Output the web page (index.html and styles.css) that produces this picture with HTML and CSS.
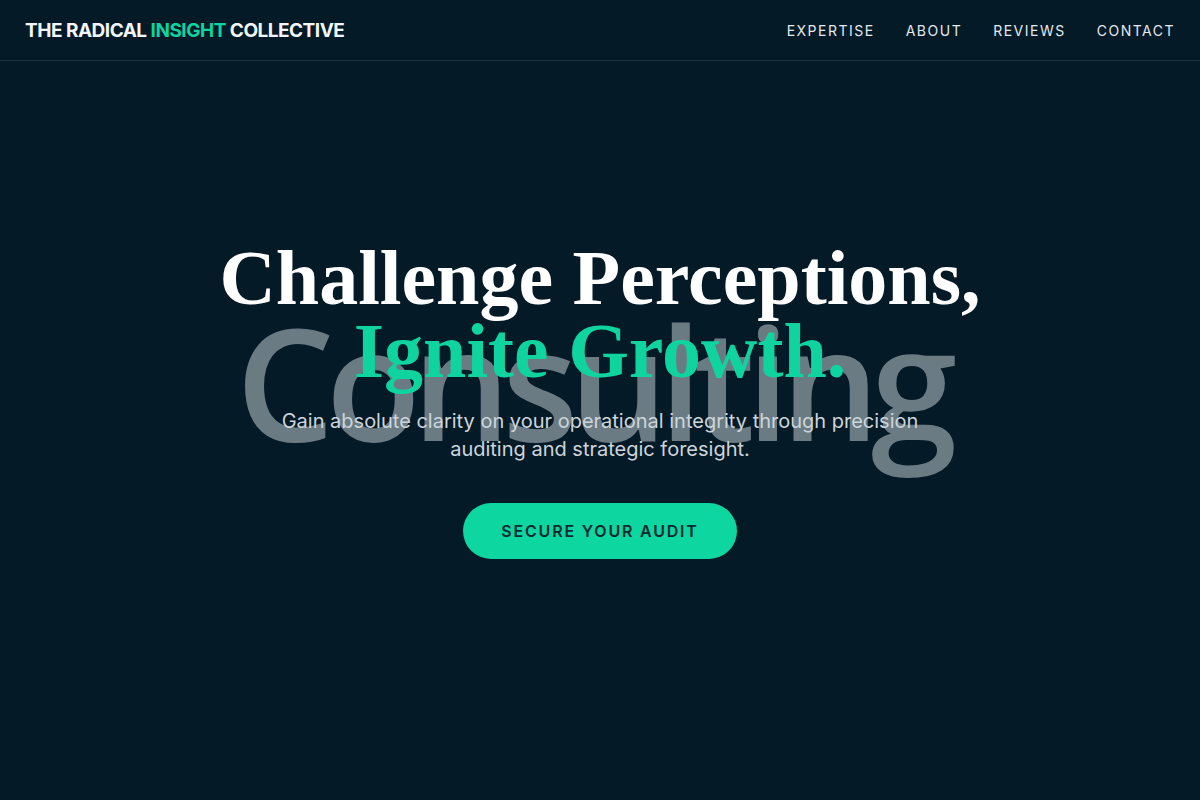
FILE: index.html
```html
<!DOCTYPE html>
<html lang="en">
<head>
<meta charset="utf-8">
<title>The Radical Insight Collective</title>
<link rel="stylesheet" href="styles.css">
</head>
<body>
<header class="nav">
  <div class="logo">THE RADICAL <span class="accent">INSIGHT</span> COLLECTIVE</div>
  <nav class="links">
    <a href="#">EXPERTISE</a>
    <a href="#">ABOUT</a>
    <a href="#">REVIEWS</a>
    <a href="#">CONTACT</a>
  </nav>
</header>
<main class="hero">
  <div class="bgword" aria-hidden="true">Consulting</div>
  <div class="content">
    <h1 class="title">Challenge Perceptions,<br><span class="accent">Ignite Growth.</span></h1>
    <p class="lead">Gain absolute clarity on your operational integrity through precision auditing and strategic foresight.</p>
    <a class="cta" href="#">SECURE YOUR AUDIT</a>
  </div>
</main>
</body>
</html>
```
FILE: styles.css
```css
* { box-sizing: border-box; }
html, body { margin: 0; padding: 0; }
body {
  background: #051a27;
  color: #ffffff;
  font-family: Inter, "Liberation Sans", sans-serif;
  overflow: hidden;
}
.nav {
  position: fixed;
  top: 0; left: 0; right: 0;
  height: 61px;
  display: flex;
  align-items: center;
  justify-content: space-between;
  padding: 0 25px;
  border-bottom: 1px solid #1c313d;
  background: #051a27;
  z-index: 10;
}
.logo {
  font-weight: 700;
  font-size: 19px;
  letter-spacing: -0.5px;
  color: #f3f6f8;
}
.accent { color: #10d4a0; }
.links { display: flex; gap: 31px; }
.links a {
  color: #e3e9ed;
  text-decoration: none;
  font-size: 14px;
  letter-spacing: 1.5px;
}
.hero {
  position: relative;
  min-height: 800px;
  display: flex;
  align-items: center;
  justify-content: center;
  text-align: center;
}
.bgword {
  position: absolute;
  left: 50%;
  top: 50%;
  transform: translate(calc(-50% - 8px), -62%);
  font-family: "Open Sans", sans-serif;
  font-weight: 600;
  font-size: 156px;
  letter-spacing: -9px;
  line-height: 1;
  color: #6a7b84;
  white-space: nowrap;
  z-index: 0;
}
.content {
  position: relative;
  z-index: 1;
  display: flex;
  flex-direction: column;
  align-items: center;
}
.title {
  margin: 0;
  font-family: "Liberation Serif", serif;
  font-weight: 700;
  font-size: 78px;
  line-height: 73px;
  color: #ffffff;
}
.lead {
  margin: 20px 0 40px;
  max-width: 680px;
  font-size: 20px;
  line-height: 28px;
  color: #cdd5db;
}
.cta {
  display: inline-flex;
  align-items: center;
  justify-content: center;
  width: 274px;
  height: 56px;
  border-radius: 28px;
  background: #0dd6a0;
  color: #0b2a30;
  font-weight: 600;
  font-size: 16px;
  letter-spacing: 1.8px;
  text-decoration: none;
}
```
